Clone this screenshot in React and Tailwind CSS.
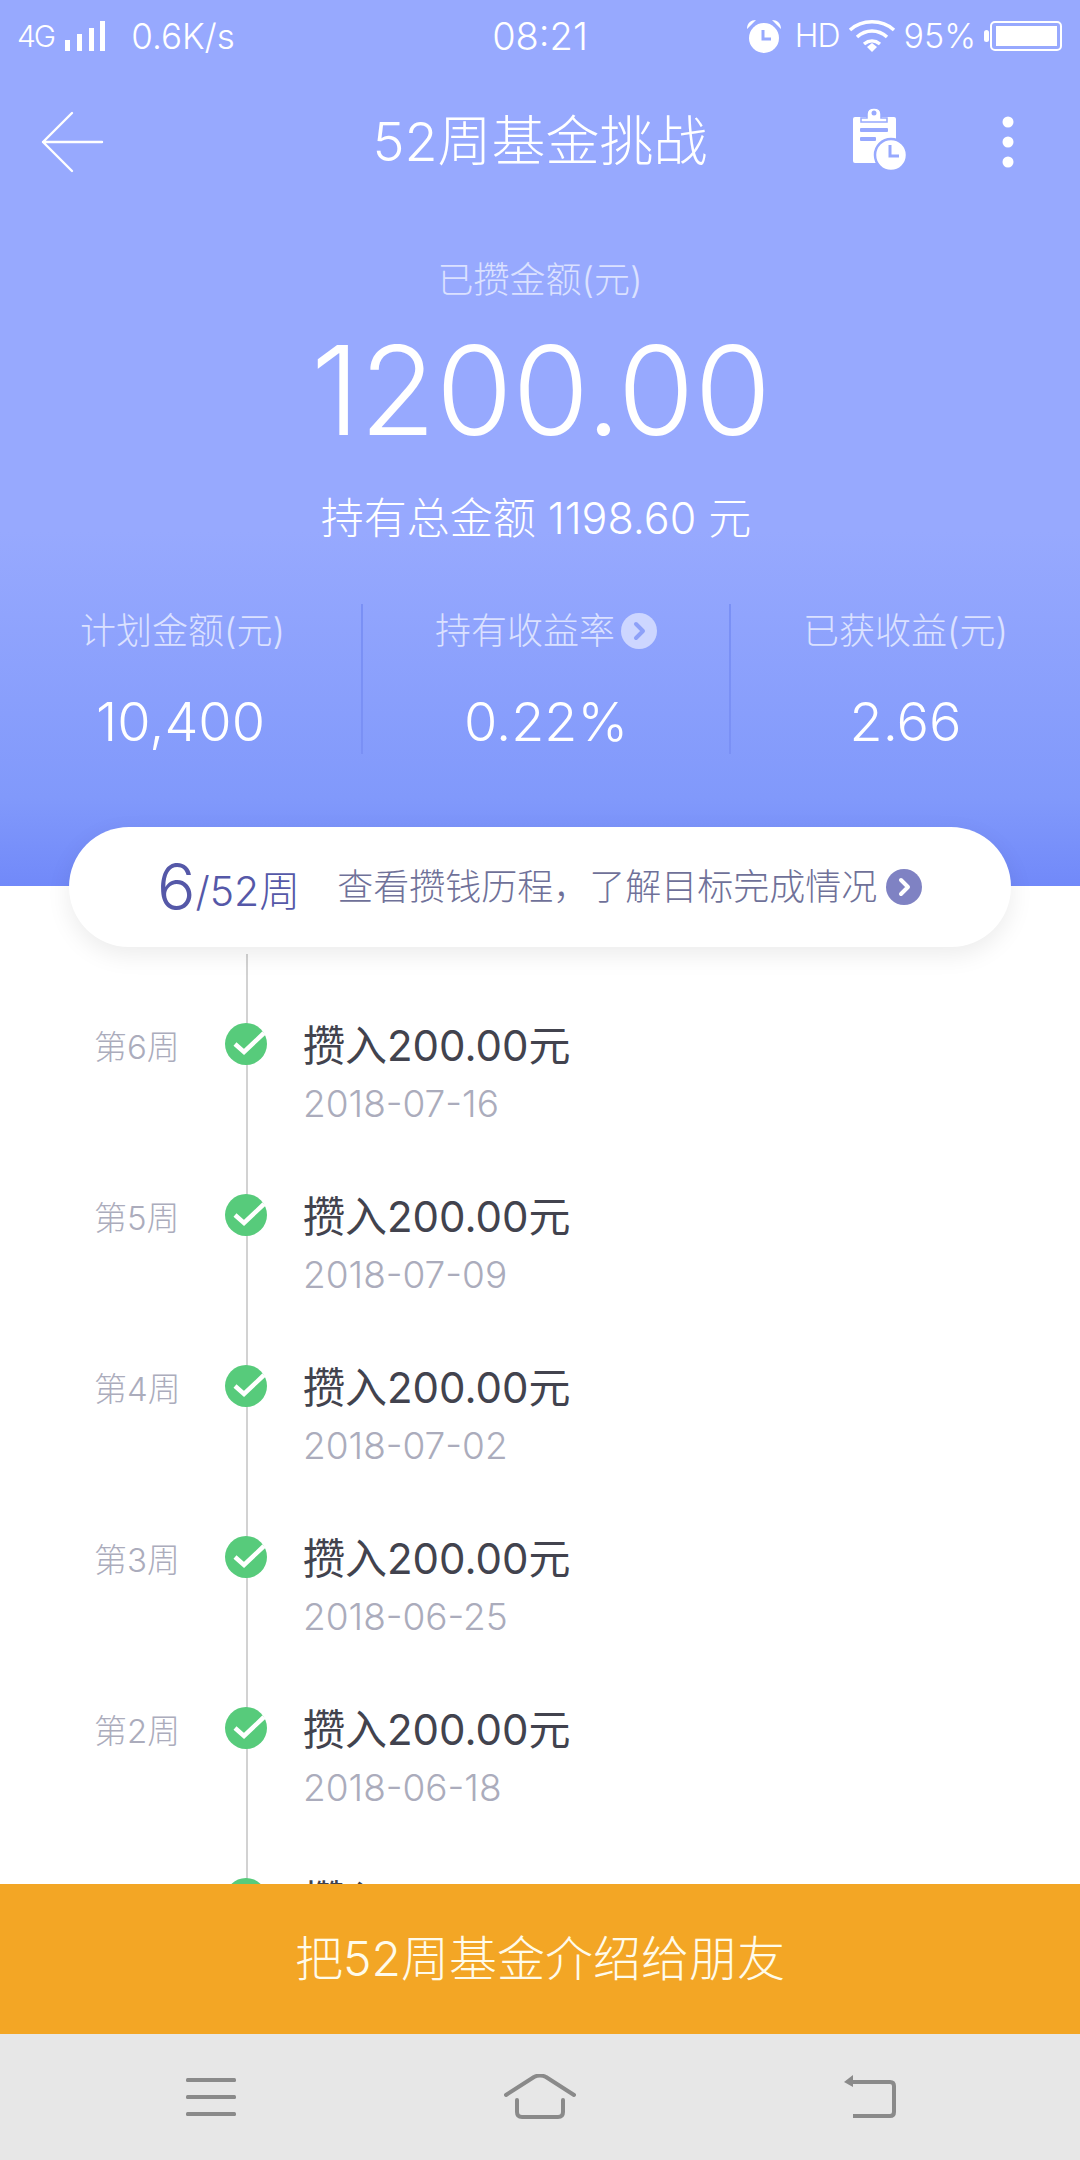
const CJK = "font-['Inter','Noto_Sans_CJK_SC',sans-serif]";

function Chevron({ bg, fg, size = 36 }) {
  return (
    <svg width={size} height={size} viewBox="0 0 36 36" className="shrink-0">
      <circle cx="18" cy="18" r="18" fill={bg} />
      <path d="M15 11 L22 18 L15 25" fill="none" stroke={fg} strokeWidth="4" strokeLinecap="round" strokeLinejoin="round" />
    </svg>
  );
}

function Check() {
  return (
    <svg width="44" height="44" viewBox="0 0 44 44" className="relative z-10 mt-[27px] shrink-0">
      <circle cx="21" cy="23" r="21" fill="#57cb7b" />
      <path d="M10 23 L19 31 L39 12" fill="none" stroke="#fff" strokeWidth="4.5" strokeLinejoin="miter" />
    </svg>
  );
}

function StatusBar() {
  return (
    <div className="grid h-[72px] grid-cols-[1fr_auto_1fr] items-center font-light text-white">
      <div className="flex items-center pl-[17px]">
        <span className="text-[30px] tracking-[-2px]">4G</span>
        <svg width="42" height="32" viewBox="0 0 42 32" className="ml-[10px]" fill="#fff">
          <rect x="1" y="20" width="5" height="11" />
          <rect x="13" y="14" width="5" height="17" />
          <rect x="25" y="8" width="5" height="23" />
          <rect x="36" y="1" width="5" height="30" />
        </svg>
        <span className="ml-[25px] text-[35px] leading-none">0.6K/s</span>
      </div>
      <span className="text-[38px] leading-none">08:21</span>
      <div className="flex items-center justify-end pr-[18px]">
        <svg width="36" height="34" viewBox="0 0 36 34" fill="#fff">
          <circle cx="18" cy="19" r="15" />
          <path d="M1 10 C1 4 5 1 10 1 Z M35 10 C35 4 31 1 26 1 Z" />
          <path d="M17 11 V20 H25" fill="none" stroke="#97a9fe" strokeWidth="3" />
        </svg>
        <span className="ml-[13px] text-[32px] leading-none tracking-[-1px]">HD</span>
        <svg width="48" height="34" viewBox="0 0 48 34" className="ml-[8px]" fill="none" stroke="#fff" strokeWidth="3.5">
          <path d="M2 11 C14 0 34 0 46 11" />
          <path d="M9 18 C18 10 30 10 39 18" />
          <path d="M16 25 C21 21 27 21 32 25" />
          <path d="M19 28 L24 24 L29 28 L24 33 Z" fill="#fff" stroke="none" />
        </svg>
        <span className="ml-[8px] text-[34px] leading-none">95%</span>
        <svg width="78" height="32" viewBox="0 0 78 32" className="ml-[8px]">
          <rect x="0" y="10" width="5" height="12" rx="2.5" fill="#fff" />
          <rect x="7" y="2" width="70" height="28" rx="4" fill="none" stroke="#fff" strokeWidth="2" />
          <rect x="12" y="6" width="61" height="20" fill="#fff" />
        </svg>
      </div>
    </div>
  );
}

function TitleBar() {
  return (
    <div className="mt-[20px] grid h-[100px] grid-cols-[1fr_auto_1fr] items-center text-white">
      <div className="pl-[40px]">
        <svg width="64" height="62" viewBox="0 0 64 62" fill="none" stroke="#fff" strokeWidth="2.4" strokeLinecap="round" strokeLinejoin="round">
          <path d="M32 2 L3 31 L32 60 M3 31 H62" />
        </svg>
      </div>
      <span className="text-[54px] leading-none font-light">52周基金挑战</span>
      <div className="flex items-center justify-end pr-[66px]">
        <svg width="58" height="66" viewBox="0 0 58 66" className="mb-[4px]">
          <path d="M5 10 H44 Q46 10 46 12 V54 Q46 56 44 56 H5 Q3 56 3 54 V12 Q3 10 5 10 Z" fill="#fff" />
          <path d="M11 15 H37 V11 H31 V7 C31 -1 17 -1 17 7 V11 H11 Z" fill="#fff" stroke="#97a9fe" strokeWidth="1.5" />
          <circle cx="24" cy="6" r="2.5" fill="#97a9fe" />
          <rect x="10" y="21" width="28" height="4" rx="1" fill="#97a9fe" />
          <rect x="10" y="30" width="16" height="4" rx="1" fill="#97a9fe" />
          <circle cx="41" cy="48" r="16" fill="#fff" stroke="#97a9fe" strokeWidth="2.5" />
          <path d="M40 38 V49 H49" fill="none" stroke="#97a9fe" strokeWidth="3" />
        </svg>
        <svg width="12" height="52" viewBox="0 0 12 52" fill="#fff" className="ml-[94px]">
          <circle cx="6" cy="6" r="5.5" />
          <circle cx="6" cy="26" r="5.5" />
          <circle cx="6" cy="46" r="5.5" />
        </svg>
      </div>
    </div>
  );
}

function Stat({ label, value, icon, border, labelClass = "" }) {
  return (
    <div className={`flex flex-col items-center ${border ? "border-l-2 border-[#7a90f5]" : ""}`}>
      <div className={`flex h-[54px] items-center text-[36px] font-light text-[#dbe1ff] ${labelClass}`}>
        <span>{label}</span>
        {icon && <span className="ml-[6px]"><Chevron bg="#cdd6ff" fg="#8ea1f8" /></span>}
      </div>
      <div className="mt-[34px] h-[60px] text-[54px] leading-[60px] font-light text-white">{value}</div>
    </div>
  );
}

function Row({ week, date }) {
  return (
    <div className="flex h-[171px] items-start pl-[94px]">
      <div className="mt-[28px] h-[50px] w-[131px] text-[33px] leading-[50px] font-light text-[#abacbc]">{week}</div>
      <Check />
      <div className="ml-[34px]">
        <div className="mt-[22px] h-[60px] text-[42px] leading-[60px] text-[#42434e]">攒入200.00元</div>
        <div className="mt-[3px] h-[50px] text-[37px] leading-[50px] font-light text-[#abacbc]">{date}</div>
      </div>
    </div>
  );
}

export default function App() {
  const rows = [
    ["第6周", "2018-07-16"],
    ["第5周", "2018-07-09"],
    ["第4周", "2018-07-02"],
    ["第3周", "2018-06-25"],
    ["第2周", "2018-06-18"],
    ["第1周", "2018-06-11"],
  ];
  return (
    <div className={`flex h-[2160px] w-[1080px] flex-col overflow-hidden bg-white ${CJK}`}>
      <header className="h-[886px] shrink-0 bg-[linear-gradient(180deg,#97a9fe_0%,#97a9fe_60%,#8199fb_90%,#7189f9_100%)]">
        <StatusBar />
        <TitleBar />
        <div className="mt-[63px] h-[50px] text-center text-[36px] leading-[50px] font-light text-[#dbe1ff]">已攒金额(元)</div>
        <div className="mt-[20px] h-[130px] pl-[2px] text-center text-[124px] leading-[130px] font-light text-white">1200.00</div>
        <div className="mt-[38px] h-[50px] pr-[8px] text-center text-[43px] leading-[50px] font-light text-white">持有总金额 1198.60 元</div>
        <div className="mt-[61px] grid h-[150px] grid-cols-[361px_368px_351px]">
          <Stat label="计划金额(元)" value="10,400" labelClass="ml-[4px]" />
          <Stat label="持有收益率" value="0.22%" icon border />
          <Stat label="已获收益(元)" value="2.66" border />
        </div>
      </header>

      <div className="relative z-20 mx-[69px] -mt-[59px] flex h-[120px] shrink-0 items-center rounded-[60px] bg-white pl-[88px] shadow-[0_8px_24px_rgba(0,0,0,0.08)]">
        <span className="text-[64px] leading-none font-light text-[#5558a8]">6</span>
        <span className="mt-[8px] text-[41px] leading-none font-light text-[#5558a8]">/52周</span>
        <span className="ml-[37px] text-[36px] leading-none font-light text-[#6f7199]">查看攒钱历程，了解目标完成情况</span>
        <span className="ml-[9px]"><Chevron bg="#7f82c3" fg="#fff" /></span>
      </div>

      <main className="relative flex-1 overflow-hidden pt-[47px]">
        <div className="absolute top-[7px] bottom-0 left-[246px] w-[2px] bg-[#d2d2d2]" />
        {rows.map(([w, d]) => (
          <Row key={w} week={w} date={d} />
        ))}
      </main>

      <div className="flex h-[150px] shrink-0 items-center justify-center bg-[#f3a625] text-[48px] font-light text-[#fffbea]">把52周基金介绍给朋友</div>

      <nav className="flex h-[126px] shrink-0 items-center justify-between bg-[#e7e7e7] pr-[184px] pl-[186px]">
        <svg width="50" height="40" viewBox="0 0 50 40" fill="#8a8a8a">
          <rect x="0" y="1" width="50" height="4" rx="1.5" />
          <rect x="0" y="18" width="50" height="4" rx="1.5" />
          <rect x="0" y="35" width="50" height="4" rx="1.5" />
        </svg>
        <svg width="72" height="46" viewBox="0 0 72 46" fill="none" stroke="#8a8a8a" strokeWidth="4" strokeLinejoin="round" strokeLinecap="round">
          <path d="M2 21 L30 3 Q36 0 42 3 L70 21" />
          <path d="M13 26 V38 Q13 43 18 43 H54 Q59 43 59 38 V26" />
        </svg>
        <svg width="52" height="44" viewBox="0 0 52 44" fill="none" stroke="#8a8a8a" strokeWidth="4">
          <path d="M6 7 H46 Q50 7 50 11 V37 Q50 41 46 41 H9" />
          <path d="M0 7 L9 0 V12 Z" fill="#8a8a8a" stroke="none" />
        </svg>
      </nav>
    </div>
  );
}
